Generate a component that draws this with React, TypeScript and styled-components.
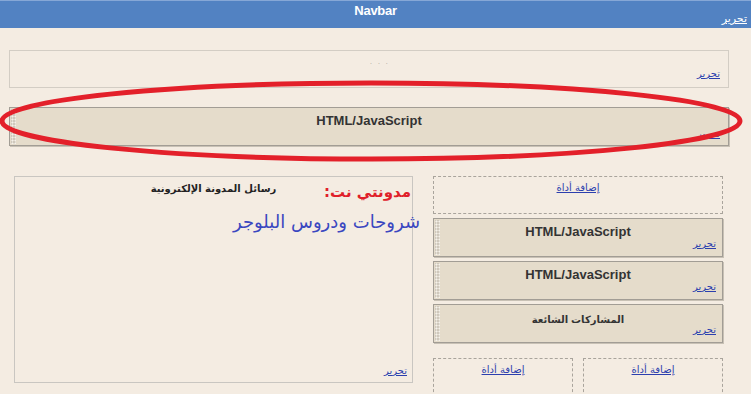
import styled, { createGlobalStyle } from "styled-components";

const GlobalStyle = createGlobalStyle`
	html, body {
		margin: 0;
		padding: 0;
		background: #f4ece2;
	}
	body {
		font-family: "Liberation Sans", "DejaVu Sans", Arial, sans-serif;
		width: 751px;
		height: 394px;
		overflow: hidden;
	}
`;

const Page = styled.div`
	position: relative;
	width: 751px;
	height: 394px;
	overflow: hidden;
	background: #f4ece2;
`;

const Navbar = styled.div`
	position: relative;
	height: 28px;
	background: #5282c2;
	border-top: 1px solid #86a7d6;
	box-sizing: border-box;
	display: flex;
	justify-content: center;
`;

const NavTitle = styled.div`
	color: #ffffff;
	font-weight: bold;
	font-size: 13px;
	line-height: 20px;
	letter-spacing: -0.3px;
`;

const NavEdit = styled.a`
	position: absolute;
	right: 4px;
	top: 11px;
	color: #ffffff;
	font-size: 11px;
	text-decoration: underline;
	font-family: "DejaVu Sans", sans-serif;
`;

const Content = styled.div`
	padding: 22px 0 0 9px;
	width: 720px;
`;

const Header = styled.div`
	position: relative;
	height: 38px;
	border: 1px solid #d3cdc4;
	box-sizing: border-box;
`;

const Specks = styled.div`
	position: absolute;
	left: 360px;
	top: 7px;
	color: #a09a92;
	font-size: 7px;
	letter-spacing: 2px;
`;

const Widget = styled.div<{ $height: number }>`
	position: relative;
	height: ${(p) => p.$height}px;
	background: #e5dccb;
	border: 1px solid #a29d95;
	box-shadow: 1px 1px 0 #c8c1b5;
	box-sizing: border-box;
	display: flex;
	flex-direction: column;
	align-items: center;

	&::before {
		content: "";
		position: absolute;
		left: 1px;
		top: 1px;
		bottom: 1px;
		width: 5px;
		background-color: #cfc8bc;
		background-image: radial-gradient(#f6f2ea 45%, transparent 50%);
		background-size: 3px 3px;
	}
`;

const WidgetTitle = styled.div<{ $small?: boolean }>`
	margin-top: ${(p) => (p.$small ? 7 : 5)}px;
	color: #333333;
	font-weight: bold;
	font-size: ${(p) => (p.$small ? 10 : 13)}px;
	line-height: 16px;
	font-family: "Liberation Sans", "DejaVu Sans", sans-serif;
`;

const EditLink = styled.a<{ $bottom: number; $right?: number }>`
	position: absolute;
	right: ${(p) => p.$right ?? 6}px;
	bottom: ${(p) => p.$bottom}px;
	color: #2c3fae;
	font-size: 10px;
	line-height: 12px;
	text-decoration: underline;
	font-family: "DejaVu Sans", sans-serif;
`;

const MainWidget = styled(Widget)`
	margin-top: 19px;
	width: 720px;
`;

const Columns = styled.div`
	display: flex;
	gap: 20px;
	margin-top: 30px;
	padding-left: 5px;
`;

const MainColumn = styled.div`
	position: relative;
	width: 399px;
	height: 207px;
	border: 1px solid #c9c6c1;
	box-sizing: border-box;
	display: flex;
	justify-content: center;
`;

const MainTitle = styled.div`
	margin-top: 6px;
	font-size: 10px;
	font-weight: bold;
	color: #222222;
	font-family: "DejaVu Sans", sans-serif;
`;

const Sidebar = styled.div`
	width: 290px;
	display: flex;
	flex-direction: column;
	gap: 4px;
`;

const AddGadget = styled.div<{ $height: number; $open?: boolean }>`
	height: ${(p) => p.$height}px;
	border: 1px dashed #a9a49c;
	border-bottom-color: ${(p) => (p.$open ? "transparent" : "#a9a49c")};
	box-sizing: border-box;
	display: flex;
	justify-content: center;
`;

const AddLink = styled.a`
	margin-top: 4px;
	color: #2c3fae;
	font-size: 10px;
	line-height: 14px;
	text-decoration: underline;
	font-family: "DejaVu Sans", sans-serif;
`;

const FooterRow = styled.div`
	display: grid;
	grid-template-columns: 1fr 1fr;
	gap: 10px;
	margin-top: 11px;
	width: 290px;
`;

const Ring = styled.svg`
	position: absolute;
	left: 0;
	top: 78px;
	pointer-events: none;
`;

const Note = styled.div`
	position: absolute;
	right: 332px;
	top: 178px;
	direction: rtl;
	text-align: right;
	font-family: "DejaVu Sans", sans-serif;
`;

const NoteRed = styled.div`
	color: #e0202a;
	font-size: 15px;
	font-weight: bold;
	line-height: 28px;
	margin-right: 8px;
`;

const NoteBlue = styled.div`
	color: #3a47c0;
	font-size: 18px;
	line-height: 32px;
	margin-right: -1px;
`;

const App = () => {
	return (
		<Page>
			<GlobalStyle />
			<Navbar>
				<NavTitle>Navbar</NavTitle>
				<NavEdit>تحرير</NavEdit>
			</Navbar>
			<Content>
				<Header>
					<Specks>. . .</Specks>
					<EditLink $bottom={7} $right={8}>تحرير</EditLink>
				</Header>
				<MainWidget $height={39}>
					<WidgetTitle>HTML/JavaScript</WidgetTitle>
					<EditLink $bottom={5} $right={8}>تحرير</EditLink>
				</MainWidget>
				<Columns>
					<MainColumn>
						<MainTitle>رسائل المدونة الإلكترونية</MainTitle>
						<EditLink $bottom={5} $right={5}>تحرير</EditLink>
					</MainColumn>
					<Sidebar>
						<AddGadget $height={38}>
							<AddLink>إضافة أداة</AddLink>
						</AddGadget>
						<Widget $height={39}>
							<WidgetTitle>HTML/JavaScript</WidgetTitle>
							<EditLink $bottom={6}>تحرير</EditLink>
						</Widget>
						<Widget $height={39}>
							<WidgetTitle>HTML/JavaScript</WidgetTitle>
							<EditLink $bottom={6}>تحرير</EditLink>
						</Widget>
						<Widget $height={39}>
							<WidgetTitle $small>المشاركات الشائعة</WidgetTitle>
							<EditLink $bottom={6}>تحرير</EditLink>
						</Widget>
						<FooterRow>
							<AddGadget $height={60} $open>
								<AddLink>إضافة أداة</AddLink>
							</AddGadget>
							<AddGadget $height={60} $open>
								<AddLink>إضافة أداة</AddLink>
							</AddGadget>
						</FooterRow>
					</Sidebar>
				</Columns>
			</Content>
			<Ring width="751" height="90" viewBox="0 0 751 90">
				<ellipse cx="371" cy="43" rx="369" ry="38" fill="none" stroke="#e3202a" strokeWidth="5" />
			</Ring>
			<Note>
				<NoteRed>مدونتي نت:</NoteRed>
				<NoteBlue>شروحات ودروس البلوجر</NoteBlue>
			</Note>
		</Page>
	);
};

export default App;
